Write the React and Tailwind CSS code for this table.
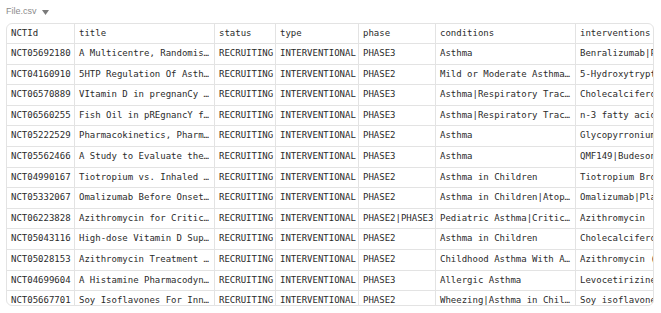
import React from "react";

const COLS = [
  { key: "id", label: "NCTId", w: "w-[68px]" },
  { key: "title", label: "title", w: "w-[140px]" },
  { key: "status", label: "status", w: "w-[61px]" },
  { key: "type", label: "type", w: "w-[83px]" },
  { key: "phase", label: "phase", w: "w-[77px]" },
  { key: "cond", label: "conditions", w: "w-[140px]" },
  { key: "interv", label: "interventions", w: "w-[140px]" },
];

const ROWS = [
  ["NCT05692180", "A Multicentre, Randomis…", "PHASE3", "Asthma", "Benralizumab|Placebo"],
  ["NCT04160910", "5HTP Regulation Of Asth…", "PHASE2", "Mild or Moderate Asthma…", "5-Hydroxytryptophan"],
  ["NCT06570889", "VItamin D in pregnanCy …", "PHASE3", "Asthma|Respiratory Trac…", "Cholecalciferol"],
  ["NCT06560255", "Fish Oil in pREgnancY f…", "PHASE3", "Asthma|Respiratory Trac…", "n-3 fatty acids"],
  ["NCT05222529", "Pharmacokinetics, Pharm…", "PHASE2", "Asthma", "Glycopyrronium"],
  ["NCT05562466", "A Study to Evaluate the…", "PHASE3", "Asthma", "QMF149|Budesonide"],
  ["NCT04990167", "Tiotropium vs. Inhaled …", "PHASE2", "Asthma in Children", "Tiotropium Bromide"],
  ["NCT05332067", "Omalizumab Before Onset…", "PHASE2", "Asthma in Children|Atop…", "Omalizumab|Placebo"],
  ["NCT06223828", "Azithromycin for Critic…", "PHASE2|PHASE3", "Pediatric Asthma|Critic…", "Azithromycin"],
  ["NCT05043116", "High-dose Vitamin D Sup…", "PHASE2", "Asthma in Children", "Cholecalciferol"],
  ["NCT05028153", "Azithromycin Treatment …", "PHASE2", "Childhood Asthma With A…", "Azithromycin (AZM)"],
  ["NCT04699604", "A Histamine Pharmacodyn…", "PHASE3", "Allergic Asthma", "Levocetirizine"],
  ["NCT05667701", "Soy Isoflavones For Inn…", "PHASE2", "Wheezing|Asthma in Chil…", "Soy isoflavones"],
];

function Cell({ w, children, last }) {
  return (
    <div
      className={`${w} shrink-0 h-full flex items-center px-[4px] overflow-hidden whitespace-pre ${
        last ? "" : "border-r border-[#e3e3e3]"
      }`}
    >
      {children}
    </div>
  );
}

export default function App() {
  return (
    <div className="w-[661px] h-[313px] bg-white overflow-hidden">
      <div className="flex items-center gap-[5px] pl-[6px] h-[23px] pt-[1px] text-[9px] text-[#8c8c8c] font-['Liberation_Sans',sans-serif]">
        <span>File.csv</span>
        <svg width="7" height="5" viewBox="0 0 7 5" className="mt-[1px]">
          <path d="M0 0 L7 0 L3.5 5 Z" fill="#7a7a7a" />
        </svg>
      </div>

      <div className="ml-[6px] w-[648px] h-[283px] border border-[#e3e3e3] rounded-[6px] overflow-hidden font-['DejaVu_Sans_Mono',monospace] text-[9px] text-[#2b2b2b]">
        <div className="flex h-[20px] border-b border-[#e3e3e3]">
          {COLS.map((c, i) => (
            <Cell key={c.key} w={c.w} last={i === COLS.length - 1}>
              {c.label}
            </Cell>
          ))}
        </div>
        {ROWS.map((r) => (
          <div key={r[0]} className="flex h-[20.6px] border-b border-[#e3e3e3]">
            <Cell w="w-[68px]">{r[0]}</Cell>
            <Cell w="w-[140px]">{r[1]}</Cell>
            <Cell w="w-[61px]">RECRUITING</Cell>
            <Cell w="w-[83px]">INTERVENTIONAL</Cell>
            <Cell w="w-[77px]">{r[2]}</Cell>
            <Cell w="w-[140px]">{r[3]}</Cell>
            <Cell w="w-[140px]" last>
              {r[4]}
            </Cell>
          </div>
        ))}
      </div>
    </div>
  );
}
